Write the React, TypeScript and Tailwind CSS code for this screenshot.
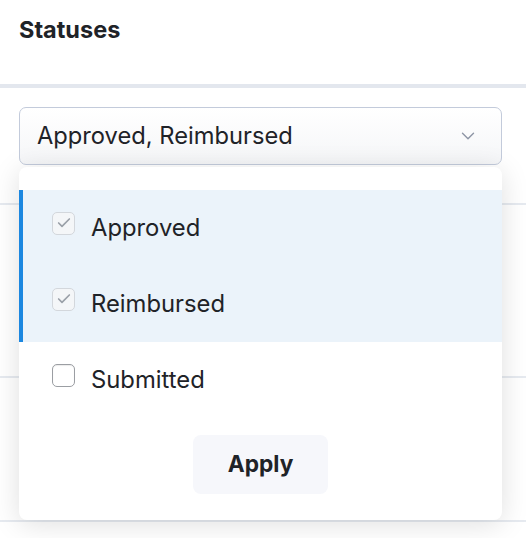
import { ChevronDown, Check } from "lucide-react";

const options = [
  { label: "Approved", checked: true },
  { label: "Reimbursed", checked: true },
  { label: "Submitted", checked: false },
];

function Box({ checked }: { checked: boolean }) {
  if (checked) {
    return (
      <span className="mb-[10px] grid h-[23px] w-[23px] shrink-0 place-items-center rounded-[5px] border border-[#d3d7dc] bg-[#f4f6f8]">
        <Check className="h-[16px] w-[16px] text-[#9aa0a8]" strokeWidth={2.5} />
      </span>
    );
  }
  return <span className="mb-[10px] h-[23px] w-[23px] shrink-0 rounded-[5px] border border-[#9b9ea3] bg-white shadow-[inset_0_1px_1px_rgba(0,0,0,0.08)]" />;
}

export default function App() {
  return (
    <div className="min-h-[538px] bg-white font-['Inter',sans-serif] text-[#1f2328]">
      <header className="flex h-[88px] items-start border-b-4 border-[#e3e7ee] px-[19px] pt-[15px]">
        <h2 className="text-[23.5px] font-bold leading-[30px]">Statuses</h2>
      </header>
      <div className="relative pl-[19px] pr-[24px] pt-[19px]">
        <div className="flex h-[58px] items-center justify-between rounded-[7px] border border-[#c3cbdb] bg-gradient-to-b from-white to-[#f5f6f8] pl-[17px] pr-[22px]">
          <span className="text-[23.7px] leading-[30px]">Approved, Reimbursed</span>
          <ChevronDown className="h-[22px] w-[22px] text-[#8d95a5]" strokeWidth={1.5} />
        </div>
        <div className="-ml-[19px] -mr-[24px]">
          <div className="h-[40px] border-b-2 border-[#e6eaf0]" />
          <div className="h-[173px] border-b-2 border-[#e6eaf0]" />
          <div className="h-[144px] border-b-2 border-[#e6eaf0]" />
        </div>
        <div className="absolute left-[19px] top-[79px] w-[483px] rounded-[8px] bg-white pb-[26px] pt-[23px] shadow-[0_4px_28px_rgba(0,0,0,0.13)]">
          {options.map((o) => (
            <div
              key={o.label}
              className={
                o.checked
                  ? "flex h-[76px] items-center gap-[16px] border-l-4 border-[#1b87e0] bg-[#ebf3fa] pl-[29px]"
                  : "flex h-[76px] items-center gap-[16px] border-l-4 border-transparent pl-[29px]"
              }
            >
              <Box checked={o.checked} />
              <span className="text-[23.8px] leading-[30px]">{o.label}</span>
            </div>
          ))}
          <div className="mt-[17px] flex justify-center">
            <button className="h-[59px] w-[135px] rounded-[8px] bg-[#f6f7fb] text-[22.7px] font-bold text-[#1f2328]">Apply</button>
          </div>
        </div>
      </div>
    </div>
  );
}
